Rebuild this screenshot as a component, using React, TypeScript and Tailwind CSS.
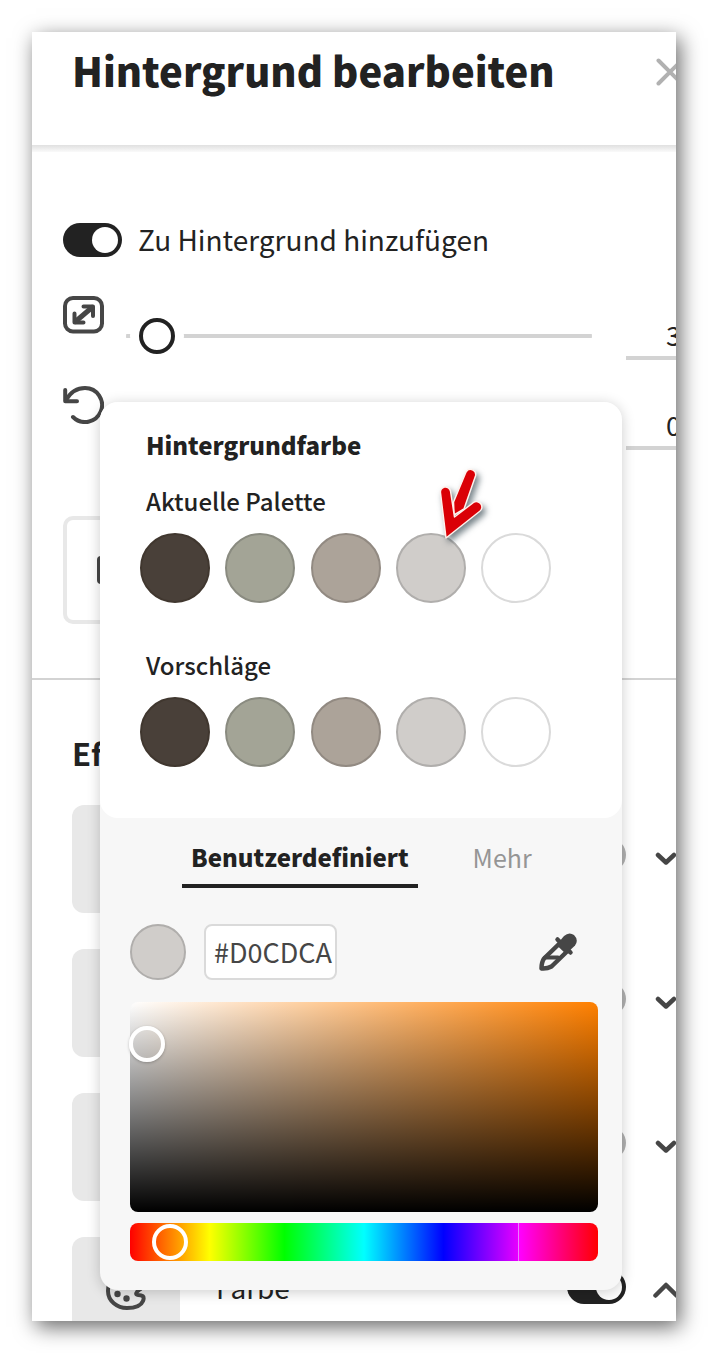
import React, { useState } from 'react';

const palette = [
  { name: 'Dunkelbraun', bg: 'bg-[#494039]', border: 'border-[#40372f]' },
  { name: 'Salbei', bg: 'bg-[#a3a496]', border: 'border-[#8a8b80]' },
  { name: 'Taupe', bg: 'bg-[#aca399]', border: 'border-[#928a82]' },
  { name: 'Hellgrau', bg: 'bg-[#d0cdca]', border: 'border-[#b0aeac]' },
  { name: 'Weiß', bg: 'bg-white', border: 'border-[#dadada]' },
];

const effects = [
  { name: 'Schatten', on: false },
  { name: 'Kontur', on: false },
  { name: 'Deckkraft', on: false },
  { name: 'Farbe', label: 'Farbe', on: true },
];

function Toggle({ id, label, checked, onChange }: { id: string; label: string; checked: boolean; onChange: () => void }) {
  return (
    <input
      id={id}
      type="checkbox"
      role="switch"
      aria-label={label}
      checked={checked}
      onChange={onChange}
      className="h-[34px] w-[59px] shrink-0 appearance-none rounded-full bg-[#b1b1b1] p-1 before:block before:size-[26px] before:rounded-full before:bg-white checked:bg-[#222] checked:before:ml-auto"
    />
  );
}

function ResizeIcon() {
  return (
    <svg width="41" height="38" viewBox="0 0 41 38" fill="none" stroke="#464646" strokeWidth="4" strokeLinecap="round" strokeLinejoin="round">
      <rect x="2" y="2" width="37" height="33.5" rx="8" />
      <path d="M20.500 10.500h9.500v9.500M20.500 26.500h-9v-9" />
      <path d="M29 11.500L12.500 25.500" strokeWidth="5" />
    </svg>
  );
}

function RotateIcon() {
  return (
    <svg width="41" height="38" viewBox="0 0 41 38" fill="none" stroke="#464646" strokeWidth="4" strokeLinecap="round" strokeLinejoin="round">
      <path d="M2.200 4v11.200H14" />
      <path d="M3 14Q10 2 22 2A17 17 0 1 1 10 31" />
    </svg>
  );
}

function EyedropperIcon() {
  return (
    <svg width="40" height="40" viewBox="0 0 40 40" fill="none" stroke="#464646" strokeLinecap="round" strokeLinejoin="round">
      <path d="M20.500 12.500L6 26.500Q3.500 30 3.500 36.500Q9 37 13.500 34.500L29 19.500" strokeWidth="4.500" />
      <path d="M7 25.500H20" strokeWidth="4" />
      <path d="M19.500 7.500L32.500 20.500" strokeWidth="4.500" />
      <path d="M18.500 13L26 4Q31 -0.500 36 3Q41 8 37 13.500L28 22Z" fill="#464646" stroke="none" />
    </svg>
  );
}

function PaletteIcon() {
  return (
    <svg width="40" height="40" viewBox="0 0 40 40" fill="none" stroke="#464646" strokeWidth="4">
      <path d="M34 11C31 5 26 2.500 20 2.500C10 2.500 2 9 2 20C2 30 11 37 21 37C29 37 35 35 37 30C39 25 36 24 32 24C29 24 30 21 33 19C37 17 36 14 34 11Z" />
      <g fill="#464646" stroke="none">
        <circle cx="11" cy="14" r="3.200" />
        <circle cx="20" cy="10" r="3.200" />
        <circle cx="11.500" cy="23" r="3.200" />
        <circle cx="20.500" cy="27.500" r="3.200" />
      </g>
    </svg>
  );
}

function PointerArrow() {
  return (
    <svg width="64" height="88" viewBox="0 0 64 88" className="pointer-events-none absolute top-[60px] left-[330px] drop-shadow-[3px_4px_3px_rgba(30,50,60,0.6)]">
      <g fill="#da0006" stroke="#fff1ec" strokeWidth="1.500" strokeLinejoin="round">
        <path d="M24 53L23.500 40L36 10A5.200 5.200 0 0 1 45.500 14L34 47Z" />
        <path d="M16 76L10.500 31A5 5 0 0 1 20.500 29L24.500 55L43.500 40.500A5 5 0 0 1 49.500 49.500Z" />
      </g>
    </svg>
  );
}

function Swatches({ title }: { title: string }) {
  return (
    <section>
      <h3 className="pl-[46px] text-2xl leading-8 font-medium">{title}</h3>
      <div className="mt-4 ml-10 flex max-w-[411px] justify-between">
        {palette.map(color => (
          <button
            key={color.name}
            aria-label={color.name}
            className={`size-[70px] rounded-full border-2 ${color.bg} ${color.border}`}
          />
        ))}
      </div>
    </section>
  );
}

function ColorPopover() {
  const [hex, setHex] = useState('#D0CDCA');
  const [hue, setHue] = useState(18);

  return (
    <div role="dialog" aria-label="Hintergrundfarbe" className="absolute top-[370px] right-[54px] left-[68px] rounded-[18px] bg-[#f7f7f7] shadow-[0_2px_14px_rgba(0,0,0,0.2)]">
      <div className="rounded-[18px] bg-white pt-[27px] pb-[51px]">
        <h2 className="pl-[46px] text-2xl leading-8 font-black">Hintergrundfarbe</h2>
        <div className="mt-6 flex flex-col gap-[46px]">
          <Swatches title="Aktuelle Palette" />
          <Swatches title="Vorschläge" />
        </div>
      </div>
      <PointerArrow />

      <div role="tablist" className="mt-[23px] flex gap-[46px] pl-[82px] text-2xl leading-8">
        <button role="tab" aria-selected="true" className="border-b-4 border-[#222] px-[9px] pb-[11px] font-black">
          Benutzerdefiniert
        </button>
        <button role="tab" aria-selected="false" className="px-[9px] pb-[15px] text-[25px] text-[#959595]">
          Mehr
        </button>
      </div>

      <div className="px-[30px] pt-9 pb-[29px] max-sm:px-4 sm:pr-6">
        <div className="flex items-center">
          <span className="size-14 rounded-full border-2 border-[#b0aeac] bg-[#d0cdca]" />
          <input
            aria-label="Hex-Farbwert"
            value={hex}
            onChange={e => setHex(e.target.value)}
            className="ml-[18px] h-14 w-[133px] rounded-lg border-2 border-[#dadada] bg-white pb-0.5 pl-2 text-[27px] text-[#464646]"
          />
          <button aria-label="Pipette" className="mr-5 ml-auto">
            <EyedropperIcon />
          </button>
        </div>
        <div className="relative mt-[22px] h-[210px] rounded-lg bg-[linear-gradient(to_top,#000,transparent),linear-gradient(to_right,#fff,#ff8000)]">
          <button
            aria-label="Farbton und Helligkeit"
            className="absolute top-6 -left-px size-9 rounded-full border-4 border-white shadow-[0_1px_3px_rgba(0,0,0,0.25)]"
          />
        </div>
        <input
          type="range"
          aria-label="Farbton"
          min={0}
          max={360}
          value={hue}
          onChange={e => setHue(Number(e.target.value))}
          className="mt-[11px] block h-[38px] w-full appearance-none rounded-lg bg-[linear-gradient(to_right,#f00,#ff0_17%,#0f0_33%,#0ff_50%,#00f_67%,#e800ff_83%,#e880ff_83%,#e880ff_83.2%,#f0f_83.2%,#f00)] [&::-webkit-slider-thumb]:size-9 [&::-webkit-slider-thumb]:appearance-none [&::-webkit-slider-thumb]:rounded-full [&::-webkit-slider-thumb]:border-4 [&::-webkit-slider-thumb]:border-white"
        />
      </div>
    </div>
  );
}

function SliderRow({ icon, label, value, onChange }: { icon: React.ReactNode; label: string; value: number; onChange: (v: number) => void }) {
  return (
    <div className="flex h-[90px] items-start">
      {icon}
      <input
        type="range"
        aria-label={label}
        value={value}
        onChange={e => onChange(Number(e.target.value))}
        className="mt-[22px] ml-[22px] h-9 flex-1 appearance-none rounded-full bg-[linear-gradient(#d3d3d3,#d3d3d3)] bg-[length:100%_4px] bg-center bg-no-repeat [&::-webkit-slider-thumb]:size-9 [&::-webkit-slider-thumb]:appearance-none [&::-webkit-slider-thumb]:rounded-full [&::-webkit-slider-thumb]:border-4 [&::-webkit-slider-thumb]:border-[#222] [&::-webkit-slider-thumb]:bg-white [&::-webkit-slider-thumb]:shadow-[0_0_0_9px_#fff]"
      />
      <input
        aria-label={`${label} Wert`}
        value={value}
        onChange={e => onChange(Number(e.target.value) || 0)}
        className="mt-4 ml-[34px] h-12 w-24 border-b-4 border-[#d3d3d3] pl-10 text-[27px]"
      />
    </div>
  );
}

export default function App() {
  const [added, setAdded] = useState(true);
  const [scale, setScale] = useState(3);
  const [rotation, setRotation] = useState(0);
  const [enabled, setEnabled] = useState(effects.map(effect => effect.on));

  return (
    <div className="h-screen bg-white p-8 font-['Noto_Sans_CJK_SC','Noto_Sans',sans-serif] text-[#222]">
      <main className="relative h-full overflow-hidden bg-white shadow-[4px_6px_20px_rgba(0,0,0,0.6)]">
        <header className="-mr-2 flex h-[113px] items-start justify-between pt-4 pl-10">
          <h1 className="text-[40px] leading-[44px] font-black whitespace-nowrap">Hintergrund bearbeiten</h1>
          <button aria-label="Schließen" className="mt-[10px]">
            <svg width="28" height="28" viewBox="0 0 28 28" stroke="#b1b1b1" strokeWidth="4" strokeLinecap="round">
              <path d="M2.500 2.500L25.500 25.500M25.500 2.500L2.500 25.500" />
            </svg>
          </button>
        </header>
        <div className="h-[7px] bg-linear-to-b from-[#e0e0e0] to-[#fafafa]" />

        <section className="-mr-[46px] pt-[71px] pl-[31px]">
          <div className="flex h-[34px] items-center gap-4">
            <Toggle id="add-background" label="Zu Hintergrund hinzufügen" checked={added} onChange={() => setAdded(!added)} />
            <label htmlFor="add-background" className="pb-0.5 text-[28px] leading-8">Zu Hintergrund hinzufügen</label>
          </div>
          <div className="mt-[39px]">
            <SliderRow icon={<ResizeIcon />} label="Größe" value={scale} onChange={setScale} />
            <SliderRow icon={<RotateIcon />} label="Drehung" value={rotation} onChange={setRotation} />
          </div>
          <button aria-label="Hintergrundfarbe wählen" className="mt-10 flex h-[108px] w-[300px] items-center rounded-[10px] border-4 border-[#e8e8e8] pl-[30px]">
            <span className="h-7 w-12 rounded-sm bg-[#464646]" />
          </button>
        </section>

        <hr className="mt-[54px] border-t-2 border-[#d3d3d3]" />

        <section className="-mr-[5px] pt-[54px] pl-10">
          <h2 className="text-[31px] leading-[38px] font-bold">Effekte</h2>
          <ul className="mt-[33px] flex flex-col gap-9">
            {effects.map((effect, i) => (
              <li key={effect.name} className="flex items-center">
                <div className="flex size-[108px] shrink-0 items-center justify-center rounded-xl bg-[#e8e8e8]">
                  <PaletteIcon />
                </div>
                <div className="flex flex-1 items-center pb-2 pl-9">
                  {effect.label && (
                    <label htmlFor={`effect-${i}`} className="text-[28px] leading-8">{effect.label}</label>
                  )}
                  <div className="ml-auto flex">
                    <Toggle
                      id={`effect-${i}`}
                      label={effect.name}
                      checked={enabled[i]}
                      onChange={() => setEnabled(enabled.map((on, j) => (j === i ? !on : on)))}
                    />
                  </div>
                </div>
                <button aria-label={`${effect.name} Optionen`} className="ml-[27px]">
                  <svg width="28" height="24" viewBox="0 0 28 24" fill="none" stroke="#464646" strokeWidth="4.500" strokeLinecap="round" strokeLinejoin="round">
                    <path d={effect.on ? 'M2.500 16.500L13 6L23.500 16.500' : 'M5 8L13 15.500L21 8'} />
                  </svg>
                </button>
              </li>
            ))}
          </ul>
        </section>

        <ColorPopover />
      </main>
    </div>
  );
}
